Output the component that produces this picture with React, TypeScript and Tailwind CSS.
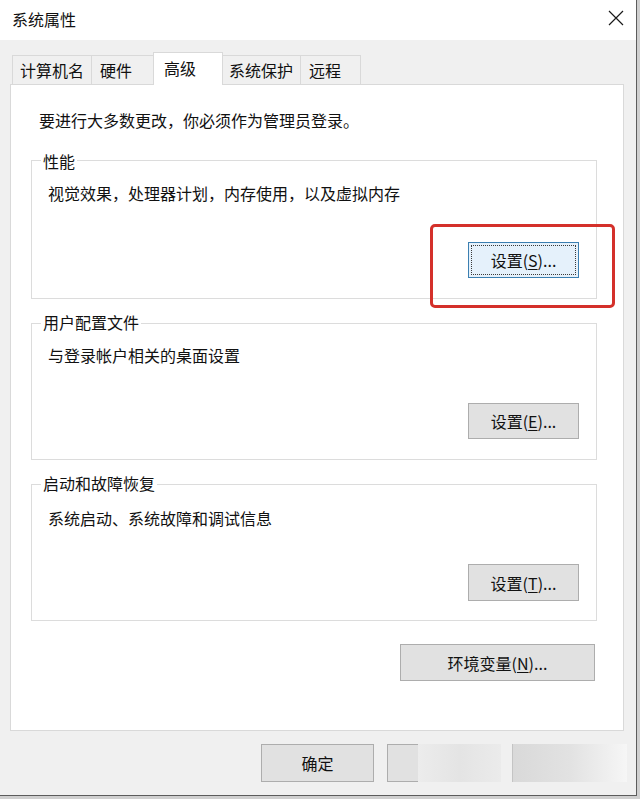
import React from 'react';

const font = { fontFamily: '"Noto Sans CJK SC", "Noto Sans", sans-serif' };

type BtnProps = { label: string; hot?: string; rest?: string; focused?: boolean; className?: string };

// win10 style push button with mnemonic underline
const WinButton = ({ label, hot, rest = '', focused, className = '' }: BtnProps) => {
    if (focused) {
        return (
            <div className={`flex items-stretch p-[2px] bg-[#e5f1fb] border border-[#3c7fb1] ${className}`}>
                <div className="flex-1 flex items-center justify-center border border-dotted border-[#3a3a3a] leading-[20px]">
                    {label}
                    {hot && <span className="underline underline-offset-2">{hot}</span>}
                    {rest}
                </div>
            </div>
        );
    }
    return (
        <div className={`flex items-center justify-center bg-[#e1e1e1] border border-[#adadad] leading-[20px] ${className}`}>
            {label}
            {hot && <span className="underline underline-offset-2">{hot}</span>}
            {rest}
        </div>
    );
};

const tabs = [
    { name: '计算机名', w: 'w-[80px]', pl: 'pl-[7px]' },
    { name: '硬件', w: 'w-[63px]', pl: 'pl-[8px]' },
    { name: '高级', w: 'w-[70px]', pl: 'pl-[10px]', active: true },
    { name: '系统保护', w: 'w-[79px]', pl: 'pl-[6px]' },
    { name: '远程', w: 'w-[61px]', pl: 'pl-[8px]' },
];

export default function App() {
    return (
        <div className="w-[640px] h-[799px] bg-[#cfcfcf] text-[16px] text-[#111]" style={font}>
            <div className="w-[637px] h-[796px] flex flex-col bg-[#f0f0f0] border-r border-b border-[#5c5c5c]">
                {/* Title bar */}
                <div className="h-[40px] bg-white flex items-center justify-between pl-[12px] pr-[12px] shrink-0">
                    <span className="leading-[20px] -mt-[2px]">系统属性</span>
                    <svg width="16" height="16" viewBox="0 0 16 16" className="-mt-[4px]">
                        <path d="M1 1 L15 15 M15 1 L1 15" stroke="#1a1a1a" strokeWidth="1.2" fill="none" />
                    </svg>
                </div>

                {/* Tabs */}
                <div className="flex items-end h-[32px] mt-[12px] ml-[12px]">
                    {tabs.map((t, i) => (
                        <div
                            key={t.name}
                            className={`${t.w} ${t.pl} flex items-center border border-b-0 border-[#d9d9d9] leading-[20px] ${i > 0 ? '-ml-px' : ''} ${
                                t.active ? 'h-[33px] -mb-px bg-white relative z-10 pb-[3px]' : 'h-[29px] bg-[#f0f0f0] pb-[1px]'
                            }`}
                        >
                            {t.name}
                        </div>
                    ))}
                </div>

                {/* Content panel */}
                <div className="relative ml-[10px] w-[614px] h-[647px] bg-white border border-[#d9d9d9] pt-[25px]">
                    <div className="pl-[28px] leading-[20px]">要进行大多数更改，你必须作为管理员登录。</div>

                    {/* 性能 */}
                    <div className="ml-[20px] mt-[30px] w-[566px] h-[139px] border border-[#dcdcdc] pl-[16px] pr-[17px]">
                        <div className="-mt-[10px] -ml-[7px] leading-[20px]"><span className="bg-white px-[2px]">性能</span></div>
                        <div className="mt-[12px] leading-[20px]">视觉效果，处理器计划，内存使用，以及虚拟内存</div>
                        <div className="flex justify-end mt-[39px]">
                            <WinButton focused label="设置(" hot="S" rest=")..." className="w-[111px] h-[36px]" />
                        </div>
                    </div>

                    {/* 用户配置文件 */}
                    <div className="ml-[20px] mt-[24px] w-[566px] h-[137px] border border-[#dcdcdc] pl-[16px] pr-[17px]">
                        <div className="-mt-[12px] -ml-[7px] leading-[20px]"><span className="bg-white px-[2px]">用户配置文件</span></div>
                        <div className="mt-[13px] leading-[20px]">与登录帐户相关的桌面设置</div>
                        <div className="flex justify-end mt-[38px]">
                            <WinButton label="设置(" hot="E" rest=")..." className="w-[111px] h-[36px]" />
                        </div>
                    </div>

                    {/* 启动和故障恢复 */}
                    <div className="ml-[20px] mt-[24px] w-[566px] h-[137px] border border-[#dcdcdc] pl-[16px] pr-[17px]">
                        <div className="-mt-[12px] -ml-[7px] leading-[20px]"><span className="bg-white px-[2px]">启动和故障恢复</span></div>
                        <div className="mt-[15px] leading-[20px]">系统启动、系统故障和调试信息</div>
                        <div className="flex justify-end mt-[36px]">
                            <WinButton label="设置(" hot="T" rest=")..." className="w-[111px] h-[37px]" />
                        </div>
                    </div>

                    <div className="flex justify-end mt-[23px] pr-[28px]">
                        <WinButton label="环境变量(" hot="N" rest=")..." className="w-[195px] h-[37px]" />
                    </div>

                    {/* red annotation box */}
                    <div className="absolute left-[419px] top-[139px] w-[185px] h-[84px] border-[3px] border-[#d4302a] rounded-[5px]" />
                </div>

                {/* Dialog buttons */}
                <div className="flex mt-[13px] pl-[261px]">
                    <WinButton label="确定" className="w-[113px] h-[38px]" />
                    <div className="relative ml-[13px] w-[114px] h-[38px] bg-[#e1e1e1] border border-[#adadad]">
                        <div className="absolute -top-px -bottom-px left-[30px] -right-px bg-gradient-to-r from-[#ececec] via-[#e4e4e4] to-[#ebebeb]" />
                    </div>
                    <div className="ml-[11px] w-[115px] h-[38px] border-l border-[#c4c4c4] bg-gradient-to-r from-[#d9d9d9] via-[#e2e2e2] to-[#f6f6f6]" />
                </div>
            </div>
        </div>
    );
}
